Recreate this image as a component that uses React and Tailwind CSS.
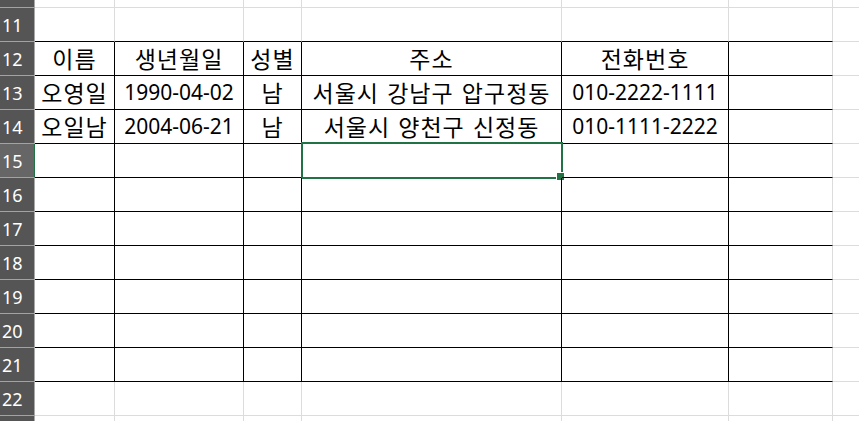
import React from 'react';

const COLS = [80, 129, 58, 260, 167, 104];

const DATA = {
  12: ['이름', '생년월일', '성별', '주소', '전화번호', ''],
  13: ['오영일', '1990-04-02', '남', '서울시 강남구 압구정동', '010-2222-1111', ''],
  14: ['오일남', '2004-06-21', '남', '서울시 양천구 신정동', '010-1111-2222', ''],
};

const ROWS = [11, 12, 13, 14, 15, 16, 17, 18, 19, 20, 21, 22];

const isNumeric = (s) => /^[0-9-]+$/.test(s);

const RowHeader = ({ n, selected }) => (
  <div
    className={
      selected
        ? 'w-[35px] shrink-0 flex items-center pt-[2px] pl-[2px] bg-[#666666] border-r border-r-[#217346] border-b border-b-[#a3a3a3] text-white text-[18px] font-["Noto_Sans",sans-serif]'
        : 'w-[35px] shrink-0 flex items-center pt-[2px] pl-[2px] bg-[#555555] border-r border-r-[#a8a8a8] border-b border-b-[#a3a3a3] text-white text-[18px] font-["Noto_Sans",sans-serif]'
    }
  >
    {n}
  </div>
);

const Cell = ({ row, col, width, text }) => {
  const blackBottom = row >= 11 && row <= 21;
  const blackRight = row >= 12 && row <= 21 && col <= 4;
  const selected = row === 15 && col === 3;

  return (
    <div
      className={[
        'relative shrink-0 flex items-center justify-center whitespace-nowrap text-black border-r border-b',
        blackBottom ? 'border-b-black' : 'border-b-[#dcdcdc]',
        blackRight ? 'border-r-black' : 'border-r-[#dcdcdc]',
        isNumeric(text)
          ? 'text-[21px] font-["Noto_Sans","Noto_Sans_CJK_KR",sans-serif]'
          : 'text-[23px] tracking-[1px] [word-spacing:2px] font-["Noto_Sans_CJK_KR",sans-serif]',
      ].join(' ')}
      style={{ width }}
    >
      {text}
      {selected && (
        <>
          <div className="absolute left-[-1px] top-[-2px] w-[262px] h-[37px] border-2 border-[#217346] pointer-events-none" />
          <div className="absolute left-[255px] top-[29px] w-[7px] h-[7px] bg-[#217346] ring-1 ring-white" />
        </>
      )}
    </div>
  );
};

const GridRow = ({ n }) => {
  const cells = DATA[n] || [];
  return (
    <div className="flex h-[34px] shrink-0">
      <RowHeader n={n} selected={n === 15} />
      {COLS.map((w, i) => (
        <Cell key={i} row={n} col={i} width={w} text={cells[i] || ''} />
      ))}
      <div className="flex-1 border-b border-b-[#dcdcdc]" />
    </div>
  );
};

const EdgeRow = ({ height }) => (
  <div className="flex shrink-0" style={{ height }}>
    <div className="w-[35px] shrink-0 bg-[#555555] border-r border-r-[#a8a8a8] border-b border-b-[#a3a3a3]" />
    {COLS.map((w, i) => (
      <div key={i} className="shrink-0 border-r border-r-[#dcdcdc] border-b border-b-[#dcdcdc]" style={{ width: w }} />
    ))}
    <div className="flex-1 border-b border-b-[#dcdcdc]" />
  </div>
);

export default function App() {
  return (
    <div className="w-[859px] h-[421px] overflow-hidden bg-white flex flex-col">
      <EdgeRow height={8} />
      {ROWS.map((n) => (
        <GridRow key={n} n={n} />
      ))}
      <EdgeRow height={34} />
    </div>
  );
}
